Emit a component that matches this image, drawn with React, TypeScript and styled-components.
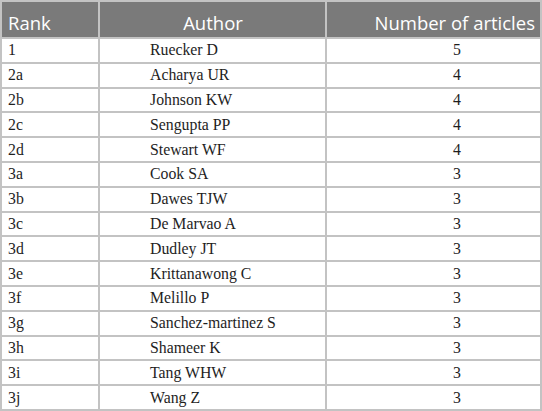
import React from 'react'
import styled, { createGlobalStyle } from 'styled-components'

const rows: [string, string, number][] = [
    ['1', 'Ruecker D', 5],
    ['2a', 'Acharya UR', 4],
    ['2b', 'Johnson KW', 4],
    ['2c', 'Sengupta PP', 4],
    ['2d', 'Stewart WF', 4],
    ['3a', 'Cook SA', 3],
    ['3b', 'Dawes TJW', 3],
    ['3c', 'De Marvao A', 3],
    ['3d', 'Dudley JT', 3],
    ['3e', 'Krittanawong C', 3],
    ['3f', 'Melillo P', 3],
    ['3g', 'Sanchez-martinez S', 3],
    ['3h', 'Shameer K', 3],
    ['3i', 'Tang WHW', 3],
    ['3j', 'Wang Z', 3],
]

const App: React.FunctionComponent = () => {
    return (
        <>
            <GlobalStyle />
            <Table>
                <Head align="left">Rank</Head>
                <Head align="center">Author</Head>
                <Head align="right">Number of articles</Head>
                {rows.map(([rank, author, count]) => (
                    <React.Fragment key={rank}>
                        <Cell>{rank}</Cell>
                        <Cell indent={44}>{author}</Cell>
                        <Cell indent={120}>{count}</Cell>
                    </React.Fragment>
                ))}
            </Table>
        </>
    )
}

const GlobalStyle = createGlobalStyle`
    body {
        margin: 0;
        background: #ffffff;
    }
`

const Table = styled.div`
    display: grid;
    grid-template-columns: 96px 225px 213px;
    grid-template-rows: 35px repeat(15, 22.8px);
    gap: 2px;
    padding: 2px;
    width: 542px;
    box-sizing: border-box;
    background: #c3c3c3;
`

const Head = styled.div<{ align: 'left' | 'center' | 'right' }>`
    background: #7a7a7a;
    color: #ffffff;
    font-family: 'Open Sans', sans-serif;
    font-size: 18.5px;
    line-height: 1;
    display: flex;
    align-items: flex-end;
    justify-content: ${(p) =>
        p.align === 'left'
            ? 'flex-start'
            : p.align === 'center'
            ? 'center'
            : 'flex-end'};
    padding: 0 5px 5px 6px;
`

const Cell = styled.div<{ indent?: number }>`
    background: #ffffff;
    color: #1e1e1e;
    font-family: 'Liberation Serif', serif;
    font-size: 15.8px;
    display: flex;
    align-items: center;
    padding-left: ${(p) => (p.indent ?? 0) + 6}px;
`

export default App
